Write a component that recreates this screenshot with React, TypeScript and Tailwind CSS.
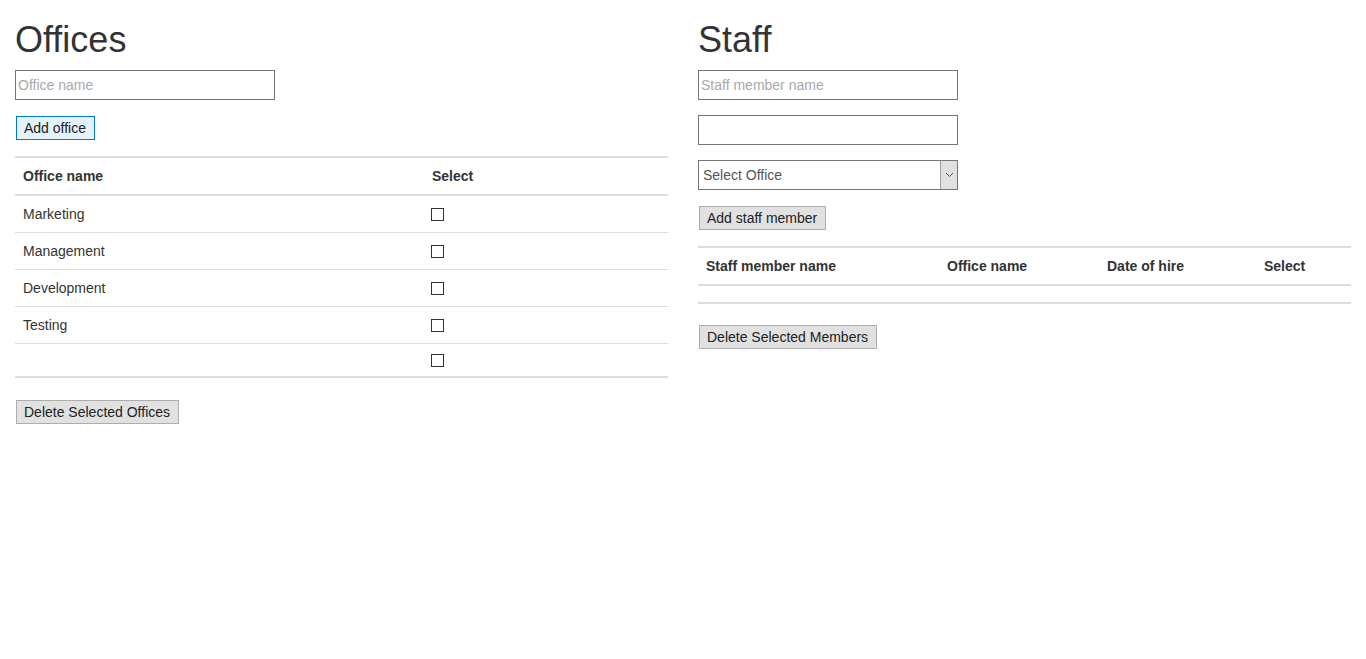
const offices = ['Marketing', 'Management', 'Development', 'Testing', '']

const font = { fontFamily: '"Liberation Sans", Arial, sans-serif' }

function Checkbox() {
  return <span className="block w-[13px] h-[13px] border border-[#333] bg-white" />
}

function Button({ children, focused }: { children: React.ReactNode; focused?: boolean }) {
  return (
    <button
      className={`ml-px h-[24px] pl-[7px] pr-[8px] text-[14px] leading-[20px] text-[#222] border ${
        focused ? 'border-[#0078d7] bg-[#e5f1fb]' : 'border-[#adadad] bg-[#e1e1e1]'
      }`}
    >
      {children}
    </button>
  )
}

function TextInput({ placeholder }: { placeholder?: string }) {
  return (
    <input
      className="block w-[260px] h-[30px] border border-[#767676] px-[2px] text-[14px] text-[#333] placeholder:text-[#a9a9a9] outline-none"
      placeholder={placeholder}
    />
  )
}

export default function App() {
  return (
    <div className="min-h-screen bg-white text-[#333] text-[14px]" style={font}>
      <div className="grid grid-cols-2">
        {/* Offices */}
        <div className="px-[15px]">
          <h1 className="mt-[20px] mb-[10px] text-[36px] leading-[40px] font-medium">Offices</h1>
          <TextInput placeholder="Office name" />
          <div className="mt-[16px]">
            <Button focused>Add office</Button>
          </div>

          <div className="mt-[16px] border-t-2 border-[#ddd]">
            <div className="flex h-[38px] items-center border-b-2 border-[#ddd] font-bold">
              <div className="w-[409px] px-[8px]">Office name</div>
              <div className="flex-1 px-[8px]">Select</div>
            </div>
            {offices.map((o, i) => (
              <div
                key={i}
                className={`flex items-center ${
                  i === offices.length - 1 ? 'h-[34px] border-b-2' : 'h-[37px] border-b'
                } border-[#ddd]`}
              >
                <div className="w-[409px] px-[8px]">{o}</div>
                <div className="flex-1 pl-[7px]">
                  <Checkbox />
                </div>
              </div>
            ))}
          </div>

          <div className="mt-[22px]">
            <Button>Delete Selected Offices</Button>
          </div>
        </div>

        {/* Staff */}
        <div className="px-[15px]">
          <h1 className="mt-[20px] mb-[10px] text-[36px] leading-[40px] font-medium">Staff</h1>
          <TextInput placeholder="Staff member name" />
          <div className="mt-[15px]">
            <TextInput />
          </div>
          <div className="mt-[15px] flex w-[260px] h-[30px] border border-[#767676]">
            <select className="flex-1 appearance-none bg-white px-[4px] text-[14px] text-[#555] outline-none">
              <option>Select Office</option>
            </select>
            <span className="flex w-[17px] items-center justify-center border-l border-[#a0a0a0] bg-[#e1e1e1]">
              <svg width="9" height="6" viewBox="0 0 9 6">
                <path d="M1 1l3.5 3.5L8 1" fill="none" stroke="#555" strokeWidth="1" />
              </svg>
            </span>
          </div>
          <div className="mt-[16px]">
            <Button>Add staff member</Button>
          </div>

          <div className="mt-[16px] border-t-2 border-[#ddd]">
            <div className="flex h-[38px] items-center border-b-2 border-[#ddd] font-bold">
              <div className="w-[241px] px-[8px]">Staff member name</div>
              <div className="w-[160px] px-[8px]">Office name</div>
              <div className="w-[157px] px-[8px]">Date of hire</div>
              <div className="flex-1 px-[8px]">Select</div>
            </div>
            <div className="h-[18px] border-b-2 border-[#ddd]" />
          </div>

          <div className="mt-[21px]">
            <Button>Delete Selected Members</Button>
          </div>
        </div>
      </div>
    </div>
  )
}
